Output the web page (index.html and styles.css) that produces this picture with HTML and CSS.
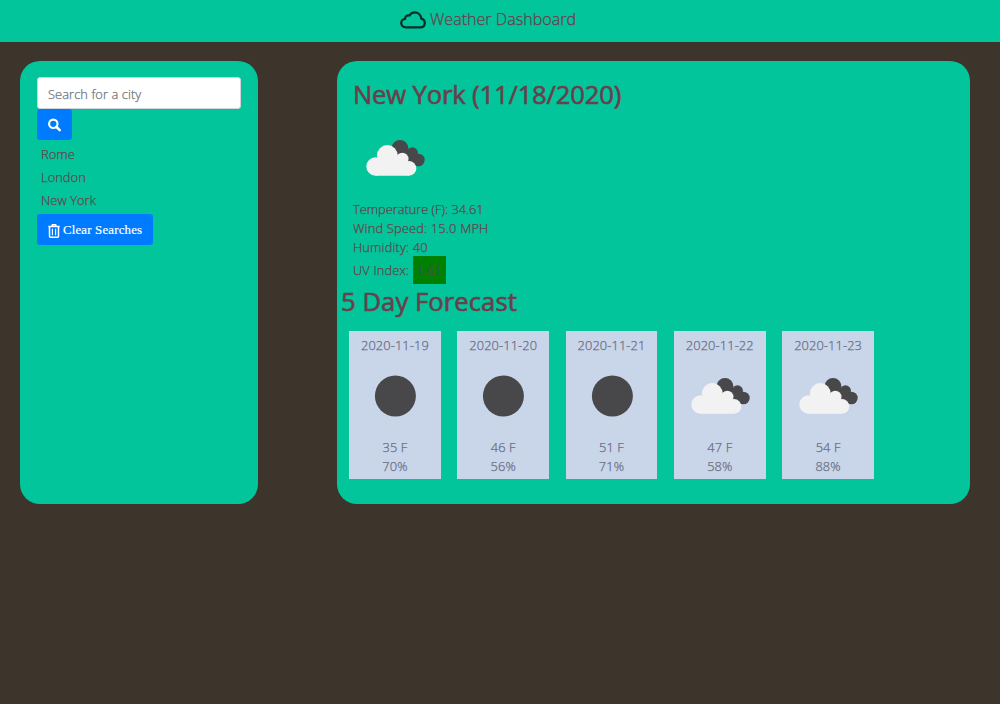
FILE: index.html
```html
<!DOCTYPE html>
<html lang="en">
<head>
<meta charset="utf-8">
<title>Weather Dashboard</title>
<link rel="stylesheet" href="styles.css">
</head>
<body>
<svg class="defs" width="0" height="0" aria-hidden="true">
  <symbol id="clouds" viewBox="0 0 80 80">
    <g fill="#48484a"><circle cx="45" cy="30.500" r="8.500"/><circle cx="57.500" cy="34.800" r="5.500"/><circle cx="63.400" cy="42" r="6.300"/><path d="M40 35l14-2 9 15h-9z"/></g>
    <g fill="#f2f2f2"><circle cx="20.500" cy="48.500" r="9.200"/><circle cx="32.300" cy="37.500" r="10.400"/><circle cx="47.300" cy="41" r="6.200"/><circle cx="54" cy="50.400" r="7.300"/><path d="M20.500 41l7-3h15l8 6 3.500 13.700H20.500z"/></g>
  </symbol>
  <symbol id="clear" viewBox="0 0 80 80"><circle cx="40.400" cy="40" r="20.500" fill="#48484a"/></symbol>
</svg>
<header class="navbar">
  <svg class="brand-icon" viewBox="0 0 26 18"><path d="M6 16.300h14.500a4.400 4.400 0 0 0 .8-8.700C20.900 3.900 18 1.300 14.800 1.300c-2.500 0-4.400 1.200-5.300 3.200C7 4 5 5.500 5 8 2.800 8.300 1.200 9.900 1.200 12.100c0 2.400 2 4.200 4.800 4.200z"/></svg>
  <span class="brand">Weather Dashboard</span>
</header>
<main class="layout">
  <aside class="panel sidebar">
    <input class="search-input" type="text" placeholder="Search for a city">
    <button class="btn search-btn" aria-label="Search"><svg width="14" height="14" viewBox="0 0 13 13" fill="none" stroke="#fff"><circle cx="5.300" cy="5.300" r="4.200" stroke-width="2.100"/><path d="M8.500 8.500l3.200 3.200" stroke-width="2.500" stroke-linecap="round"/></svg></button>
    <ul class="history"><li>Rome</li><li>London</li><li>New York</li></ul>
    <button class="btn clear-btn"><svg width="12" height="14" viewBox="0 0 12 14" fill="none" stroke="#fff"><path d="M.3 2.500h11.400M3.700 2.300l.7-1.500h3.200l.7 1.500M1.500 3v9.200q0 1 1 1h7q1 0 1-1V3" stroke-width="1.500"/><path d="M4.400 4.700v6.600M7.600 4.700v6.600" stroke-width="1.100"/></svg><span>Clear Searches</span></button>
  </aside>
  <section class="panel content">
    <div class="current">
      <h2 class="city">New York (11/18/2020)</h2>
      <svg class="current-icon"><use href="#clouds"/></svg>
      <p>Temperature (F): 34.61</p>
      <p class="wind">Wind Speed: 15.0 MPH</p>
      <p class="humidity">Humidity: 40</p>
      <p class="uv-row">UV Index: <span class="uv">1.61</span></p>
    </div>
    <h2 class="forecast-title">5 Day Forecast</h2>
    <div class="forecast">
      <div class="card"><p>2020-11-19</p><svg><use href="#clear"/></svg><p>35 F</p><p>70%</p></div>
      <div class="card"><p>2020-11-20</p><svg><use href="#clear"/></svg><p>46 F</p><p>56%</p></div>
      <div class="card"><p>2020-11-21</p><svg><use href="#clear"/></svg><p>51 F</p><p>71%</p></div>
      <div class="card"><p>2020-11-22</p><svg><use href="#clouds"/></svg><p>47 F</p><p>58%</p></div>
      <div class="card"><p>2020-11-23</p><svg><use href="#clouds"/></svg><p>54 F</p><p>88%</p></div>
    </div>
  </section>
</main>
</body>
</html>
```
FILE: styles.css
```css
* { box-sizing: border-box; }
body { margin: 0; min-height: 704px; background: #3d342b; color: #69404b; font: 300 12.8px/19px "Open Sans", "Noto Sans", sans-serif; -webkit-text-stroke: .25px; }
p, h2, ul { margin: 0; padding: 0; }
.defs { display: block; height: 0; }
.navbar { height: 42px; background: #02c59b; display: flex; justify-content: center; align-items: flex-start; padding: 7px 24px 0 0; gap: 4px; }
.brand-icon { width: 26px; height: 18px; margin-top: 4px; fill: none; stroke: #062d27; stroke-width: 2.2; }
.brand { width: 146px; white-space: nowrap; font-size: 16px; line-height: 24px; letter-spacing: .04px; }
.layout { display: flex; justify-content: space-between; padding: 19px 30px 0 20px; }
.panel { height: 443px; background: #02c59b; border-radius: 20px; }
.sidebar { width: 238px; padding: 16px 17px; display: flex; flex-direction: column; align-items: flex-start; }
.search-input { width: 204px; height: 32px; padding: 2px 10px 0; border: 1px solid #ced4da; border-radius: 3px; background: #fff; font: 300 12.8px "Open Sans", sans-serif; letter-spacing: .1px; -webkit-text-stroke: .25px; }
.search-input::placeholder { color: #6c757d; opacity: 1; }
.btn { height: 31px; border: 0; border-radius: 3px; background: #007bff; color: #fff; padding: 0 11px; display: flex; align-items: center; }
.search-btn { width: 35px; padding-top: 1px; }
.history { list-style: none; padding: 3px 4px 0; line-height: 23px; height: 74px; letter-spacing: .08px; }
.clear-btn { width: 116px; gap: 3px; padding-top: 2px; font: 12.8px "Liberation Serif", serif; letter-spacing: .2px; -webkit-text-stroke: .2px #fff; white-space: nowrap; }
.clear-btn svg { flex: none; }
.content { width: 633px; padding: 17px 4px 16px; }
.current { padding-left: 12px; }
.city, .forecast-title { font: 400 25.6px/34px "Open Sans", "Noto Sans", sans-serif; letter-spacing: -.15px; -webkit-text-stroke: .6px; }
.current-icon { display: block; width: 80px; height: 80px; margin: 6px 0 2px 2px; }
.wind { letter-spacing: .2px; }
.humidity, .uv-row { letter-spacing: .17px; }
.uv-row { height: 28px; margin-top: -1px; line-height: 28px; display: flex; gap: 4px; }
.uv { width: 33px; background: #008000; text-align: center; }
.forecast .card p { letter-spacing: .12px; }
.forecast-title { margin-top: 1px; letter-spacing: .08px; }
.forecast { display: flex; gap: 16.4px; padding: 12px 0 0 8px; }
.card { width: 91.9px; height: 148px; padding-top: 5px; background: #c9d6ea; color: #686b82; text-align: center; }
.card svg { display: block; width: 80px; height: 80px; margin: 1px auto 2px; }
```
